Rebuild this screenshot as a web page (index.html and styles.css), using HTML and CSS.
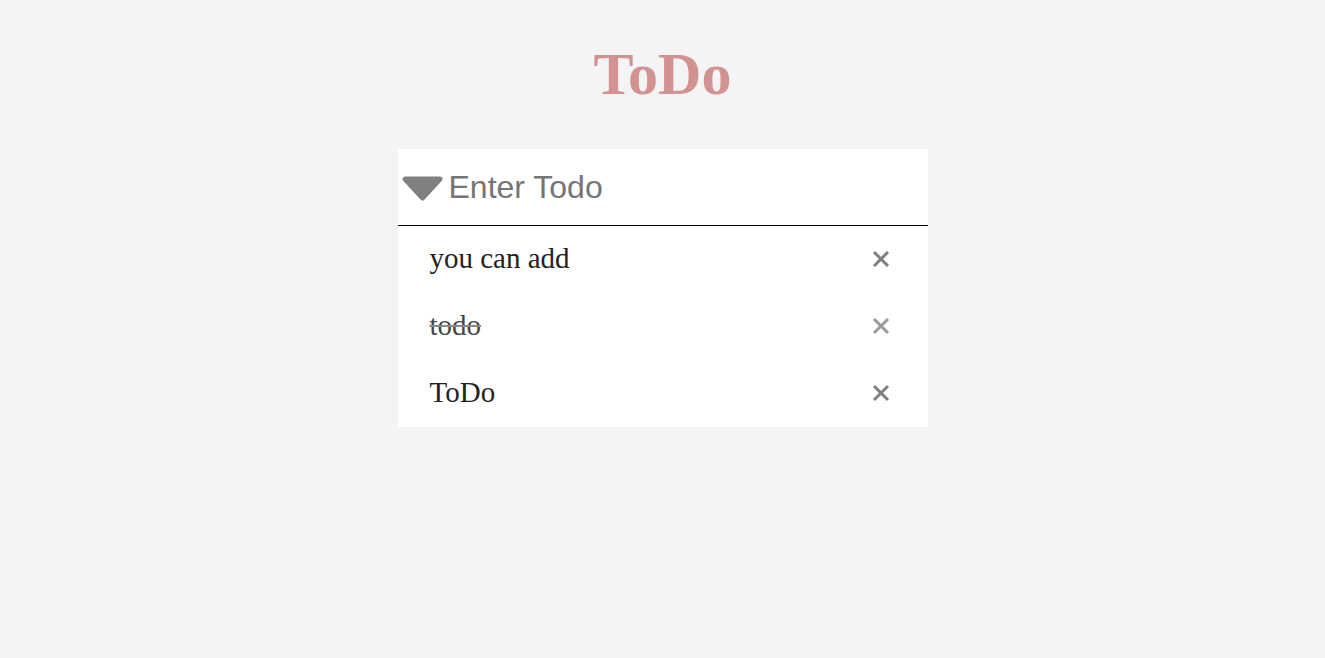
FILE: index.html
```html
<!DOCTYPE html>
<html>
<head>
<meta charset="utf-8">
<link rel="stylesheet" href="styles.css">
</head>
<body>
<div class="app">
  <h1 class="title">ToDo</h1>
  <div class="panel">
    <div class="entry">
      <svg class="toggle" width="43" height="28" viewBox="0 0 43 28"><path d="M4 4 L39 4 L21.5 23 Z" fill="#808080" stroke="#808080" stroke-width="5" stroke-linejoin="round"/></svg>
      <input class="field" type="text" placeholder="Enter Todo">
    </div>
    <ul class="list">
      <li class="item"><span class="label">you can add</span><svg class="remove" width="18" height="18" viewBox="0 0 18 18"><path d="M2 2 L16 16 M16 2 L2 16" stroke="#808080" stroke-width="3"/></svg></li>
      <li class="item done"><span class="label">todo</span><svg class="remove" width="18" height="18" viewBox="0 0 18 18"><path d="M2 2 L16 16 M16 2 L2 16" stroke="#9a9a9a" stroke-width="3"/></svg></li>
      <li class="item"><span class="label">ToDo</span><svg class="remove" width="18" height="18" viewBox="0 0 18 18"><path d="M2 2 L16 16 M16 2 L2 16" stroke="#808080" stroke-width="3"/></svg></li>
    </ul>
  </div>
</div>
</body>
</html>
```
FILE: styles.css
```css
html, body {
  margin: 0;
  padding: 0;
  background: #f4f4f4;
}
.app {
  display: flex;
  flex-direction: column;
  align-items: center;
  padding-top: 36px;
}
.title {
  margin: 0;
  font-family: "Liberation Serif", serif;
  font-weight: bold;
  font-size: 60px;
  line-height: 76px;
  color: #d29292;
}
.panel {
  margin-top: 37px;
  width: 530px;
  background: #fff;
}
.entry {
  display: flex;
  align-items: center;
  height: 77px;
  border-bottom: 1px solid #000;
  padding-left: 3px;
  box-sizing: border-box;
}
.toggle {
  display: block;
  margin-top: 3px;
}
.field {
  border: none;
  outline: none;
  background: transparent;
  flex: 1;
  margin-left: 5px;
  padding: 0;
  font-family: "Liberation Sans", Arial, sans-serif;
  font-size: 32px;
  color: #333;
}
.field::placeholder {
  color: #757575;
}
.list {
  list-style: none;
  margin: 0;
  padding: 0;
}
.item {
  display: flex;
  align-items: center;
  justify-content: space-between;
  height: 67px;
  padding: 0 38px 2px 32px;
  box-sizing: border-box;
  font-family: "Liberation Serif", serif;
  font-size: 29px;
  color: #222;
}
.done .label {
  color: #444;
  text-decoration: line-through;
  text-decoration-color: #888;
}
.remove {
  display: block;
}
```
